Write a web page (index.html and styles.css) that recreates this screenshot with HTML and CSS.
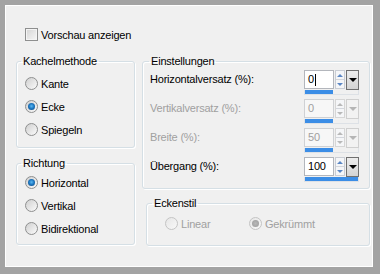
FILE: index.html
```html
<!DOCTYPE html>
<html lang="de">
<head>
    <meta charset="UTF-8">
    <meta name="viewport" content="width=device-width, initial-scale=1.0">
    <title>Kacheln</title>
    <link rel="stylesheet" href="styles.css">
</head>
<body>
    <div class="frame">
        <div class="panel">
            <label class="preview"><span class="check"></span>Vorschau anzeigen</label>
            <div class="columns">
                <div class="col-left">
                    <fieldset class="group group-method">
                        <legend>Kachelmethode</legend>
                        <label class="radio-row"><span class="radio"></span>Kante</label>
                        <label class="radio-row"><span class="radio on"></span>Ecke</label>
                        <label class="radio-row"><span class="radio"></span>Spiegeln</label>
                    </fieldset>
                    <fieldset class="group group-direction">
                        <legend>Richtung</legend>
                        <label class="radio-row"><span class="radio on"></span>Horizontal</label>
                        <label class="radio-row"><span class="radio"></span>Vertikal</label>
                        <label class="radio-row"><span class="radio"></span>Bidirektional</label>
                    </fieldset>
                </div>
                <div class="col-right">
                    <fieldset class="group group-settings">
                        <legend>Einstellungen</legend>
                        <div class="field-row">
                            <span class="field-label">Horizontalversatz (%):</span>
                            <div class="spin">
                                <div class="spin-top">
                                    <span class="spin-value">0<span class="caret"></span></span>
                                    <span class="spin-arrows"><span class="arrow-up"></span><span class="arrow-down"></span></span>
                                    <span class="spin-drop"></span>
                                </div>
                                <div class="spin-track"><div class="spin-fill" style="width: 28px"></div></div>
                            </div>
                        </div>
                        <div class="field-row disabled">
                            <span class="field-label">Vertikalversatz (%):</span>
                            <div class="spin">
                                <div class="spin-top">
                                    <span class="spin-value">0</span>
                                    <span class="spin-arrows"><span class="arrow-up"></span><span class="arrow-down"></span></span>
                                    <span class="spin-drop"></span>
                                </div>
                                <div class="spin-track"><div class="spin-fill" style="width: 28px"></div></div>
                            </div>
                        </div>
                        <div class="field-row disabled">
                            <span class="field-label">Breite (%):</span>
                            <div class="spin">
                                <div class="spin-top">
                                    <span class="spin-value">50</span>
                                    <span class="spin-arrows"><span class="arrow-up"></span><span class="arrow-down"></span></span>
                                    <span class="spin-drop"></span>
                                </div>
                                <div class="spin-track"><div class="spin-fill" style="width: 28px"></div></div>
                            </div>
                        </div>
                        <div class="field-row">
                            <span class="field-label">Übergang (%):</span>
                            <div class="spin">
                                <div class="spin-top">
                                    <span class="spin-value">100</span>
                                    <span class="spin-arrows"><span class="arrow-up"></span><span class="arrow-down"></span></span>
                                    <span class="spin-drop"></span>
                                </div>
                                <div class="spin-track"><div class="spin-fill" style="width: 100%"></div></div>
                            </div>
                        </div>
                    </fieldset>
                    <fieldset class="group group-corner">
                        <legend>Eckenstil</legend>
                        <div class="corner-options">
                            <label class="radio-row disabled corner-linear"><span class="radio"></span>Linear</label>
                            <label class="radio-row disabled"><span class="radio on"></span>Gekrümmt</label>
                        </div>
                    </fieldset>
                </div>
            </div>
        </div>
    </div>
</body>
</html>
```

FILE: styles.css
```css
body {
    margin: 0;
    font-family: "Liberation Sans", Arial, sans-serif;
    font-size: 11px;
    letter-spacing: -0.2px;
    color: #000;
}

.frame {
    width: 380px;
    height: 274px;
    box-sizing: border-box;
    border-style: solid;
    border-color: #a3a3a3;
    border-width: 5px 7px 7px 5px;
}

.panel {
    height: 100%;
    box-sizing: border-box;
    border: 1px solid #fff;
    background: #f0f0f0;
    padding: 22px 0 0 10px;
}

/* checkbox row */
.preview {
    display: flex;
    align-items: center;
    height: 13px;
    padding-left: 9px;
}

.check {
    width: 13px;
    height: 13px;
    box-sizing: border-box;
    margin-right: 3px;
    border: 1px solid #8e8f8f;
    background: linear-gradient(135deg, #d4d4d4, #f7f7f7);
    box-shadow: inset 0 0 0 1px #f4f4f4;
}

.columns {
    display: flex;
    gap: 7px;
    margin-top: 13px;
}

.col-left {
    width: 119px;
}

.col-right {
    width: 228px;
}

/* group boxes */
.group {
    margin: 0;
    min-width: 0;
    border: 1px solid #d5dfe5;
    border-radius: 3px;
    box-shadow: inset 1px 1px 0 #fff, 1px 1px 0 #fff;
}

.group legend {
    line-height: 14px;
    padding: 0 2px;
}

.group-method {
    padding: 4px 4px 6px 8px;
}

.group-method legend {
    margin-left: -4px;
}

.group-direction {
    margin-top: 8px;
    padding: 1px 4px 4px 8px;
}

.group-direction legend {
    margin-left: -4px;
}

.group-settings {
    padding: 2px 10px 7px 7px;
}

.group-settings legend {
    margin-left: -1px;
}

.group-corner {
    margin: 7px 0 0 4px;
    padding: 2px 4px 10px 18px;
}

.group-corner legend {
    margin-left: -13px;
}

/* radios */
.radio-row {
    display: flex;
    align-items: center;
    height: 23px;
}

.radio {
    width: 13px;
    height: 13px;
    box-sizing: border-box;
    margin-right: 3px;
    border: 1px solid #8e8f8f;
    border-radius: 50%;
    background: linear-gradient(135deg, #cfcfcf, #fbfbfb);
    display: flex;
    align-items: center;
    justify-content: center;
}

.radio.on::after {
    content: "";
    width: 7px;
    height: 7px;
    border-radius: 50%;
    background: radial-gradient(circle at 50% 45%, #5cb9f2 0, #1f7ac4 45%, #0b3f73 100%);
}

.radio-row.disabled {
    color: #a0a0a0;
}

.radio-row.disabled .radio {
    border-color: #c4c4c4;
    background: linear-gradient(135deg, #e6e6e6, #f8f8f8);
}

.radio-row.disabled .radio.on::after {
    background: radial-gradient(circle, #b8b8b8 0, #9a9a9a 100%);
}

.corner-options {
    display: flex;
}

.corner-linear {
    width: 84px;
}

/* spinner rows */
.field-row {
    display: flex;
    justify-content: space-between;
    height: 24px;
}

.field-row + .field-row {
    margin-top: 5px;
}

.field-label {
    line-height: 18px;
}

.field-row.disabled .field-label {
    color: #a0a0a0;
}

.spin {
    width: 55px;
    box-sizing: border-box;
}

.spin-top {
    display: flex;
    height: 19px;
}

.spin-value {
    width: 31px;
    box-sizing: border-box;
    border: 1px solid #b3b6bc;
    background: #fff;
    padding-left: 3px;
    line-height: 17px;
    display: flex;
    align-items: center;
}

.caret {
    width: 1px;
    height: 12px;
    margin-left: 1px;
    background: #000;
}

.spin-arrows {
    width: 11px;
    margin-left: 1px;
    box-sizing: border-box;
    border: 1px solid #c9cdd4;
    background: #f5f6f8;
    display: flex;
    flex-direction: column;
}

.spin-arrows span {
    flex: 1;
    display: flex;
    align-items: center;
    justify-content: center;
}

.spin-arrows span + span {
    border-top: 1px solid #d3d6dc;
}

.arrow-up::after {
    content: "";
    border-left: 3px solid transparent;
    border-right: 3px solid transparent;
    border-bottom: 3px solid #5a86c4;
}

.arrow-down::after {
    content: "";
    border-left: 3px solid transparent;
    border-right: 3px solid transparent;
    border-top: 3px solid #5a86c4;
}

.spin-drop {
    width: 13px;
    height: 20px;
    margin-left: 1px;
    box-sizing: border-box;
    border: 1px solid #707070;
    background: linear-gradient(#ececec, #d4d4d4);
    display: flex;
    align-items: center;
    justify-content: center;
}

.spin-drop::after {
    content: "";
    border-left: 4px solid transparent;
    border-right: 4px solid transparent;
    border-top: 4px solid #000;
}

.spin-track {
    height: 4px;
    margin-top: 1px;
    border: 1px solid #dde1e6;
    border-top: 0;
}

.spin-fill {
    height: 4px;
    background: #3b8de6;
}

.field-row.disabled .spin-value {
    color: #a0a0a0;
    background: #f7f7f7;
    border-color: #cfd1d4;
}

.field-row.disabled .spin-arrows {
    border-color: #d6d6d6;
}

.field-row.disabled .arrow-up::after {
    border-bottom-color: #b8b8b8;
}

.field-row.disabled .arrow-down::after {
    border-top-color: #b8b8b8;
}

.field-row.disabled .spin-drop {
    border-color: #cfcfcf;
    background: #f2f2f2;
}

.field-row.disabled .spin-drop::after {
    border-top-color: #b5b5b5;
}
```
